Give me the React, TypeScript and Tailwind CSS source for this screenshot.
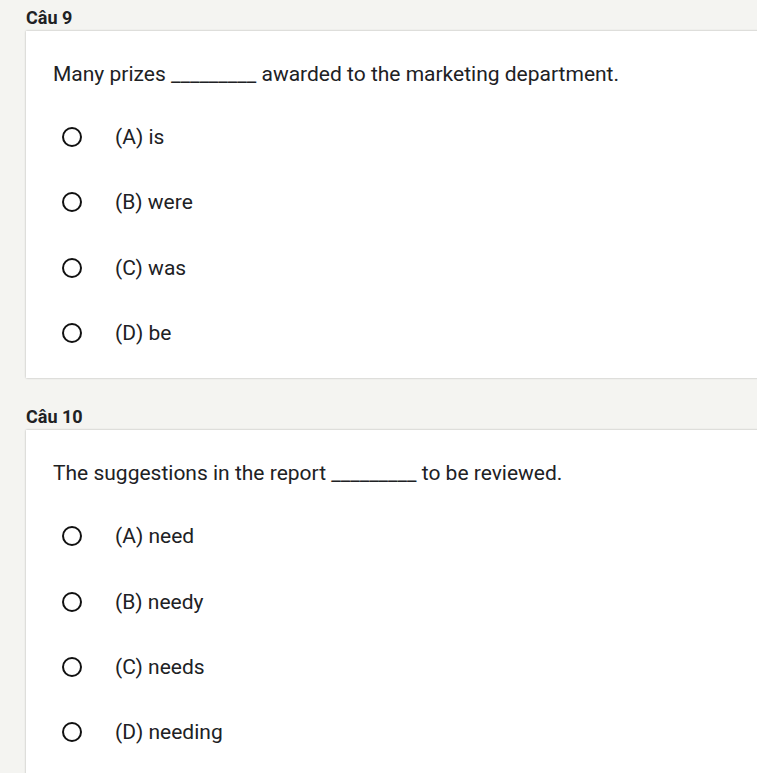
import React from "react";

type Q = { label: string; before: string; after: string; options: string[] };

const questions: Q[] = [
  {
    label: "Câu 9",
    before: "Many prizes",
    after: "awarded to the marketing department.",
    options: ["(A) is", "(B) were", "(C) was", "(D) be"],
  },
  {
    label: "Câu 10",
    before: "The suggestions in the report",
    after: "to be reviewed.",
    options: ["(A) need", "(B) needy", "(C) needs", "(D) needing"],
  },
];

function Question({ q, first }: { q: Q; first: boolean }) {
  return (
    <div className={first ? "pt-[7px]" : "pt-[28px]"}>
      <div className="h-[24px] text-[18px] font-bold leading-[22px] text-[#202124]">{q.label}</div>
      <div className="w-[820px] bg-white shadow-[0_0_2px_rgba(0,0,0,0.28)] pl-[27px] pt-[29px] pb-[25px]">
        <div className="text-[21px] leading-[28px] text-[#202124]">
          {q.before} _________ {q.after}
        </div>
        <div className="mt-[29px] flex flex-col gap-[25.4px]">
          {q.options.map((o) => (
            <div key={o} className="flex h-[40px] items-center">
              <div className="ml-[9px] h-[20px] w-[20px] rounded-full border-2 border-[#111]" />
              <div className="ml-[33px] text-[21px] leading-[28px] text-[#202124]">{o}</div>
            </div>
          ))}
        </div>
      </div>
    </div>
  );
}

export default function App() {
  return (
    <div
      className="h-[773px] w-[757px] overflow-hidden bg-[#f4f4f1] pl-[26px]"
      style={{ fontFamily: "Roboto, 'Noto Sans', sans-serif" }}
    >
      {questions.map((q, i) => (
        <Question key={q.label} q={q} first={i === 0} />
      ))}
    </div>
  );
}
